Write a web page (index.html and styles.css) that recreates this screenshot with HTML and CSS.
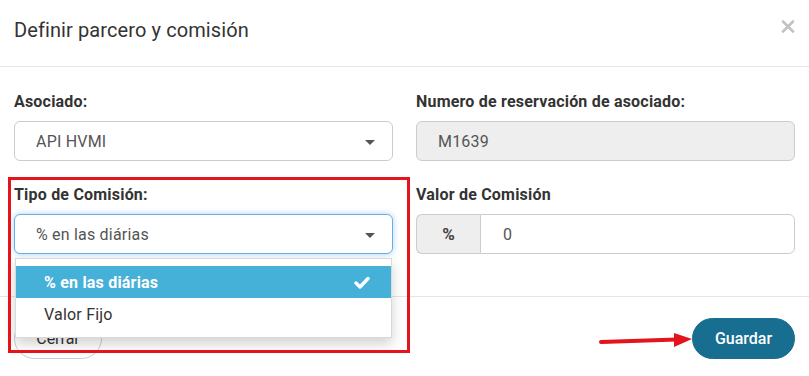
FILE: index.html
```html
<!DOCTYPE html>
<html lang="es">
<head>
  <meta charset="UTF-8">
  <meta name="viewport" content="width=device-width, initial-scale=1.0"/>
  <title>Definir parcero y comisión</title>
  <link rel="stylesheet" href="styles.css">
</head>
<body>
  <div class="modal">
    <!-- header -->
    <div class="modal-header">
      <h4 class="modal-title">Definir parcero y comisión</h4>
      <button class="close" type="button" aria-label="Cerrar">
        <svg width="14" height="13" viewBox="0 0 14 13"><path d="M2 1.5 L12 11.5 M12 1.5 L2 11.5" stroke="#c2c2c2" stroke-width="2.6" stroke-linecap="round"/></svg>
      </button>
    </div>

    <!-- body -->
    <div class="modal-body">
      <div class="form-group">
        <label>Asociado:</label>
        <div class="select">
          <span>API HVMI</span>
          <span class="caret"></span>
        </div>
      </div>
      <div class="form-group">
        <label>Numero de reservación de asociado:</label>
        <div class="input disabled">M1639</div>
      </div>
      <div class="form-group">
        <label>Tipo de Comisión:</label>
        <div class="select focused">
          <span>% en las diárias</span>
          <span class="caret"></span>
          <ul class="dropdown">
            <li class="active">
              <span>% en las diárias</span>
              <svg width="16" height="13" viewBox="0 0 16 13"><path d="M2 7 L6 11 L14 2.5" fill="none" stroke="#fff" stroke-width="3.4" stroke-linecap="round" stroke-linejoin="round"/></svg>
            </li>
            <li>Valor Fijo</li>
          </ul>
        </div>
      </div>
      <div class="form-group">
        <label>Valor de Comisión</label>
        <div class="input-group">
          <span class="addon">%</span>
          <div class="input">0</div>
        </div>
      </div>
    </div>

    <!-- footer -->
    <div class="modal-footer">
      <button class="btn btn-default">Cerrar</button>
      <button class="btn btn-primary">Guardar</button>
    </div>

    <!-- annotations -->
    <div class="highlight"></div>
    <svg class="arrow" width="100" height="20" viewBox="0 0 100 20">
      <path d="M2 12 L78 9.5" stroke="#e3141b" stroke-width="4" stroke-linecap="round"/>
      <polygon points="75,3 93,9 75,17" fill="#e3141b"/>
    </svg>
  </div>
</body>
</html>
```

FILE: styles.css
```css
* {
  box-sizing: border-box;
}

body {
  margin: 0;
  background: #fff;
  font-family: Roboto, "Liberation Sans", sans-serif;
  color: #333;
}

.modal {
  position: relative;
  width: 809px;
  height: 376px;
  overflow: hidden;
  background: #fff;
}

.modal-header {
  height: 67px;
  padding: 18px 14px 0;
  border-bottom: 1px solid #e5e5e5;
  display: flex;
  justify-content: space-between;
  align-items: flex-start;
}

.modal-title {
  margin: 0;
  font-size: 20px;
  font-weight: 400;
  line-height: 24px;
  letter-spacing: 0.1px;
  color: #333;
}

.close {
  background: none;
  border: none;
  padding: 0;
  margin: 2px 0 0;
  line-height: 0;
  cursor: pointer;
}

.modal-body {
  padding: 24px 14px 0;
  display: grid;
  grid-template-columns: 1fr 1fr;
  align-content: start;
  column-gap: 23px;
  height: 229px;
}

.form-group {
  margin-bottom: 23px;
}

label {
  display: block;
  font-size: 16px;
  font-weight: 700;
  line-height: 21px;
  letter-spacing: 0.2px;
  margin-bottom: 9px;
  color: #333;
}

.select,
.input {
  position: relative;
  height: 40px;
  border: 1px solid #ccc;
  border-radius: 6px;
  padding: 0 21px;
  display: flex;
  align-items: center;
  font-size: 16px;
  letter-spacing: 0.2px;
  color: #555;
  background: #fff;
}

.select .caret {
  position: absolute;
  right: 17px;
  top: 18px;
  width: 0;
  height: 0;
  border-left: 5px solid transparent;
  border-right: 5px solid transparent;
  border-top: 5px solid #555;
}

.select.focused {
  border-color: #66afe9;
  box-shadow: 0 0 6px rgba(102, 175, 233, 0.55);
}

.input.disabled {
  background: #eee;
}

.input-group {
  display: flex;
}

.input-group .addon {
  width: 64px;
  height: 40px;
  border: 1px solid #ccc;
  border-right: none;
  border-radius: 6px 0 0 6px;
  background: #eee;
  display: flex;
  align-items: center;
  justify-content: center;
  font-size: 17px;
  font-weight: 700;
  color: #444;
}

.input-group .input {
  flex: 1;
  border-radius: 0 6px 6px 0;
  padding-left: 22px;
}

.dropdown {
  position: absolute;
  top: 43px;
  left: 0;
  right: 0;
  margin: 0;
  padding: 7px 0;
  list-style: none;
  background: #fff;
  border: 1px solid rgba(0, 0, 0, 0.15);
  box-shadow: 0 6px 12px rgba(0, 0, 0, 0.175);
  z-index: 5;
}

.dropdown li {
  height: 32px;
  padding: 0 21px 0 28px;
  display: flex;
  align-items: center;
  justify-content: space-between;
  font-size: 16px;
  letter-spacing: 0.2px;
  color: #333;
}

.dropdown li.active {
  background: #45b0d8;
  color: #fff;
  font-weight: 700;
}

.modal-footer {
  border-top: 1px solid #e5e5e5;
  padding: 21px 14px 0;
  display: flex;
  justify-content: space-between;
}

.btn {
  height: 41px;
  border-radius: 21px;
  font-family: Roboto, "Liberation Sans", sans-serif;
  font-size: 16px;
  cursor: pointer;
}

.btn-default {
  width: 88px;
  background: #fff;
  border: 1px solid #ccc;
  color: #333;
}

.btn-primary {
  width: 103px;
  background: #176e91;
  border: 1px solid #176e91;
  color: #fff;
  font-weight: 500;
}

.highlight {
  position: absolute;
  left: 8px;
  top: 177px;
  width: 402px;
  height: 176px;
  border: 3px solid #e3141b;
  z-index: 6;
}

.arrow {
  position: absolute;
  left: 599px;
  top: 330px;
}
```
